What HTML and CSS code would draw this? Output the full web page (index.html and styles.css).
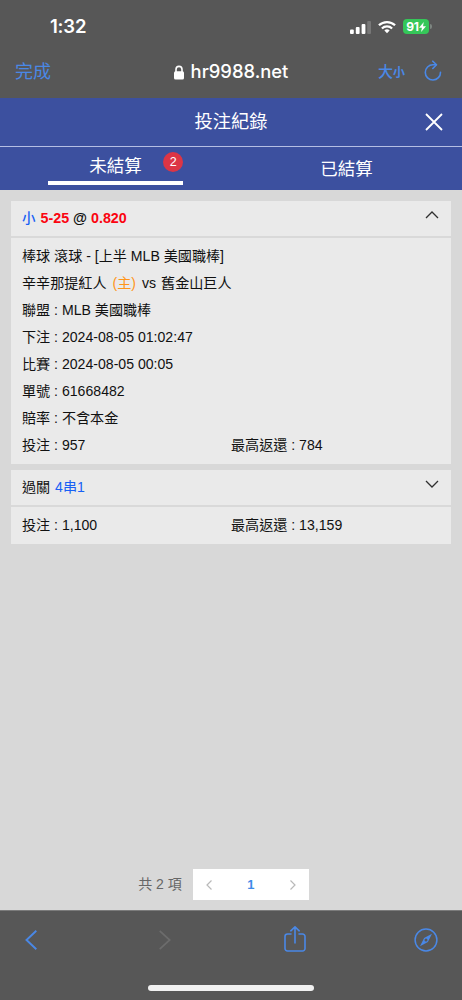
FILE: index.html
```html
<!DOCTYPE html>
<html lang="zh-Hant">
<head>
<meta charset="utf-8">
<meta name="viewport" content="width=device-width, initial-scale=1">
<title>投注紀錄</title>
<link rel="stylesheet" href="styles.css">
</head>
<body>
<div class="screen">
  <div class="status">
    <span class="time">1:32</span>
    <div class="status-icons">
      <svg class="signal" width="21" height="14" viewBox="0 0 21 14" fill="#fff"><rect x="0" y="9.5" width="3.8" height="4.500" rx="1"/><rect x="5.800" y="7" width="3.800" height="7" rx="1"/><rect x="11.600" y="4" width="3.800" height="10" rx="1"/><rect x="17.200" y="1" width="3.800" height="13" rx="1" fill="#777"/></svg>
      <svg class="wifi" width="18" height="14" viewBox="0 0 19 14" fill="none" stroke="#fff" stroke-width="2.4"><path d="M1 5.2a12.2 12.2 0 0 1 17 0"/><path d="M4.1 8.6a7.8 7.8 0 0 1 10.8 0"/><path d="M9.5 13.6 6.7 10.8a4 4 0 0 1 5.6 0Z" fill="#fff" stroke="none"/></svg>
      <div class="battery"><span>91</span><svg width="7" height="10" viewBox="0 0 7 10"><path d="M4.8 0 0 5.7h2.9L2.1 10 7 4.2H4Z" fill="#fff"/></svg></div>
      <i class="battery-cap"></i>
    </div>
  </div>
  <div class="address">
    <span class="done">完成</span>
    <div class="url"><svg width="12" height="15" viewBox="0 0 12 15"><path d="M3 7V4.4a3 3 0 0 1 6 0V7" fill="none" stroke="#fff" stroke-width="1.6"/><rect x="1" y="6.3" width="10" height="8.2" rx="1.5" fill="#fff"/></svg><span>hr9988.net</span></div>
    <div class="tools"><span class="big">大</span><span class="small">小</span>
      <svg class="reload" width="18" height="22" viewBox="0 0 18 22" fill="none" stroke="#4a88e6" stroke-width="1.6" stroke-linecap="round" stroke-linejoin="round"><path d="M16.5 12.2A7.6 7.6 0 1 1 9 4.8h3"/><path d="m8.8 1.2 3.7 3.6-3.7 3.7"/></svg>
    </div>
  </div>
  <header class="title"><h1>投注紀錄</h1><svg class="close" width="18" height="18" viewBox="0 0 18 18" stroke="#fff" stroke-width="1.8"><path d="m1 1 16 16M17 1 1 17"/></svg></header>
  <nav class="tabs">
    <div class="tab active"><span class="label">未結算<b class="badge">2</b></span></div>
    <div class="tab"><span class="label">已結算</span></div>
  </nav>
  <main class="content">
    <section class="card">
      <div class="card-head"><div class="pick"><span class="blue">小</span> 5-25 <span class="at">@</span> 0.820</div><svg width="14" height="8" viewBox="0 0 14 8" fill="none" stroke="#303030" stroke-width="1.3"><path d="m1 7 6-6 6 6"/></svg></div>
      <div class="card-body">
        <p>棒球 滾球 - [上半 MLB 美國職棒]</p>
        <p>辛辛那提紅人<span class="home">(主)</span>vs <span class="away">舊金山巨人</span></p>
        <p>聯盟 : MLB 美國職棒</p>
        <p>下注 : 2024-08-05 01:02:47</p>
        <p>比賽 : 2024-08-05 00:05</p>
        <p>單號 : 61668482</p>
        <p>賠率 : 不含本金</p>
        <div class="amounts"><span>投注 : 957</span><span>最高返還 : 784</span></div>
      </div>
    </section>
    <section class="card">
      <div class="card-head"><div>過關 <span class="blue parlay">4串1</span></div><svg width="14" height="8" viewBox="0 0 14 8" fill="none" stroke="#303030" stroke-width="1.3"><path d="m1 1 6 6 6-6"/></svg></div>
      <div class="card-body short">
        <div class="amounts"><span>投注 : 1,100</span><span>最高返還 : 13,159</span></div>
      </div>
    </section>
    <div class="pagination">
      <span class="total">共 2 項</span>
      <div class="pager">
        <svg width="6" height="10" viewBox="0 0 6 10" fill="none" stroke="#b9b9b9" stroke-width="1.2"><path d="M5.5.5 1 5l4.500 4.500"/></svg>
        <b>1</b>
        <svg width="6" height="10" viewBox="0 0 6 10" fill="none" stroke="#b9b9b9" stroke-width="1.2"><path d="M.5.5 5 5 .5 9.500"/></svg>
      </div>
    </div>
  </main>
  <footer class="browser-bar">
    <div class="actions">
      <svg width="12" height="20" viewBox="0 0 12 20" fill="none" stroke="#4a88e6" stroke-width="1.9"><path d="M11.300.8 1.500 10l9.800 9.200"/></svg>
      <svg class="forward" width="12" height="20" viewBox="0 0 12 20" fill="none" stroke="#6c6c6c" stroke-width="1.7"><path d="M.7.800 10.700 10 .7 19.200"/></svg>
      <svg class="share" width="22" height="27" viewBox="0 0 22 27" fill="none" stroke="#4a88e6" stroke-width="1.6" stroke-linecap="round" stroke-linejoin="round"><path d="M7 8H3.500A2.500 2.500 0 0 0 1 10.500v12A2.500 2.500 0 0 0 3.500 25h15a2.500 2.500 0 0 0 2.500-2.500v-12A2.500 2.500 0 0 0 18.500 8H15M11 17V1M6.800 4.800 11 .9l4.200 3.900"/></svg>
      <svg width="24" height="24" viewBox="0 0 24 24"><circle cx="12" cy="12" r="10.900" fill="none" stroke="#4a88e6" stroke-width="1.500"/><path fill="#4a88e6" fill-rule="evenodd" d="M18 5.800 13.900 13.900 6 18.200l4.100-8.100ZM12 10.500a1.500 1.500 0 1 0 0 3 1.500 1.500 0 0 0 0-3Z"/></svg>
    </div>
    <div class="home-indicator"></div>
  </footer>
</div>
</body>
</html>
```
FILE: styles.css
```css
* { box-sizing: border-box; }
body { margin: 0; background: #575757; font-family: "Liberation Sans", "Noto Sans CJK TC", sans-serif; }
svg { display: block; flex: none; }
.screen { width: 462px; height: 1000px; display: flex; flex-direction: column; background: #575757; color: #fff; overflow: hidden; }
.status { height: 52px; flex: none; padding: 15px 30px 0 50px; display: flex; justify-content: space-between; align-items: flex-start; }
.time { font: 600 18.500px/23px Inter, sans-serif; letter-spacing: -0.2px; }
.status-icons { display: flex; align-items: center; height: 23px; }
.wifi { margin: 0 7px 0 7px; }
.battery { width: 26px; height: 15px; border-radius: 4px; background: #35c759; display: flex; align-items: center; justify-content: center; font: 700 12px/15px Inter, sans-serif; letter-spacing: -0.3px; }
.battery-cap { width: 2px; height: 5px; margin-left: 1px; border-radius: 0 2px 2px 0; background: #7d8580; }
.address { height: 46px; flex: none; padding: 0 20px 6px 15px; display: grid; grid-template-columns: 1fr auto 1fr; align-items: center; color: #4a88e6; }
.done { font-size: 18px; line-height: 24px; }
.url { display: flex; align-items: center; gap: 6px; margin: 0 -2px 0 2px; font: 500 18.400px/24px Inter, sans-serif; color: #fff; }
.url span { position: relative; top: -1px; }
.tools { display: flex; justify-content: flex-end; align-items: center; font-weight: 500; }
.big { font-size: 15px; line-height: 22px; }
.small { font-size: 12px; line-height: 16px; padding-top: 2px; font-weight: 700; }
.reload { margin: -2px 0 0 19px; }
.title { height: 49px; flex: none; padding: 0 19px 0 0; display: grid; grid-template-columns: 1fr auto 1fr; align-items: center; background: #3c509f; border-bottom: 1px solid #b5bfe4; }
.title h1 { grid-column: 2; margin: 0 -19px 0 0; font-weight: 400; font-size: 18.300px; line-height: 26px; }
.close { justify-self: end; }
.tabs { height: 43px; flex: none; display: grid; grid-template-columns: 1fr 1fr; background: #3c509f; }
.tab { display: flex; justify-content: center; padding-top: 9px; font-size: 17.500px; line-height: 26px; }
.tab.active { width: 135px; height: 38px; margin-left: 48px; padding-top: 6px; border-bottom: 4px solid #fff; }
.label { position: relative; }
.badge { position: absolute; left: 74px; top: -1px; width: 20px; height: 20px; border-radius: 50%; background: #dc3545; font-weight: 400; font-size: 12.500px; line-height: 20px; text-align: center; }
.content { flex: 1; display: flex; flex-direction: column; gap: 6px; padding: 11px 11px 10px; background: #d8d8d8; color: #111; font-size: 14.100px; }
.card { background: #eaeaea; }
.card-head { height: 37px; display: flex; justify-content: space-between; padding: 3px 12px 0 11px; line-height: 29px; border-bottom: 2px solid #d9d9d9; }
.card-head svg { margin-top: 7px; }
.pick { font-weight: 700; font-size: 14.300px; color: #fb0410; }
.pick .blue { margin-right: 1px; font-size: 13.500px; font-weight: 500; }
.blue { color: #1760f5; }
.parlay { margin-left: 1px; }
.at { color: #111; }
.card-body { padding: 5px 11px; line-height: 27px; height: 226px; }
.card-body p { margin: 0; height: 27px; white-space: nowrap; }
.card-body.short { height: 37px; }
.home { color: #ff9519; margin: 0 6px; }
.away { margin-left: 1px; }
.amounts { display: grid; grid-template-columns: 1fr 1fr; }
.pagination { margin-top: auto; display: flex; justify-content: center; align-items: center; gap: 11px; padding-right: 15px; }
.total { color: #666; font-size: 14px; padding-bottom: 3px; }
.pager { width: 116px; height: 31px; padding: 0 13px; display: flex; justify-content: space-between; align-items: center; background: #fff; color: #3f8be8; font-size: 13px; }
.browser-bar { height: 90px; flex: none; border-top: 1px solid #7b7b7b; display: flex; flex-direction: column; align-items: center; }
.actions { width: 100%; height: 58px; padding: 0 24px 0 25px; display: flex; align-items: center; }
.forward { margin-left: 122px; }
.share { margin: 0 auto 2px 113px; }
.home-indicator { width: 166px; height: 6px; margin-top: 16px; border-radius: 3px; background: #f1f1f1; }
```
